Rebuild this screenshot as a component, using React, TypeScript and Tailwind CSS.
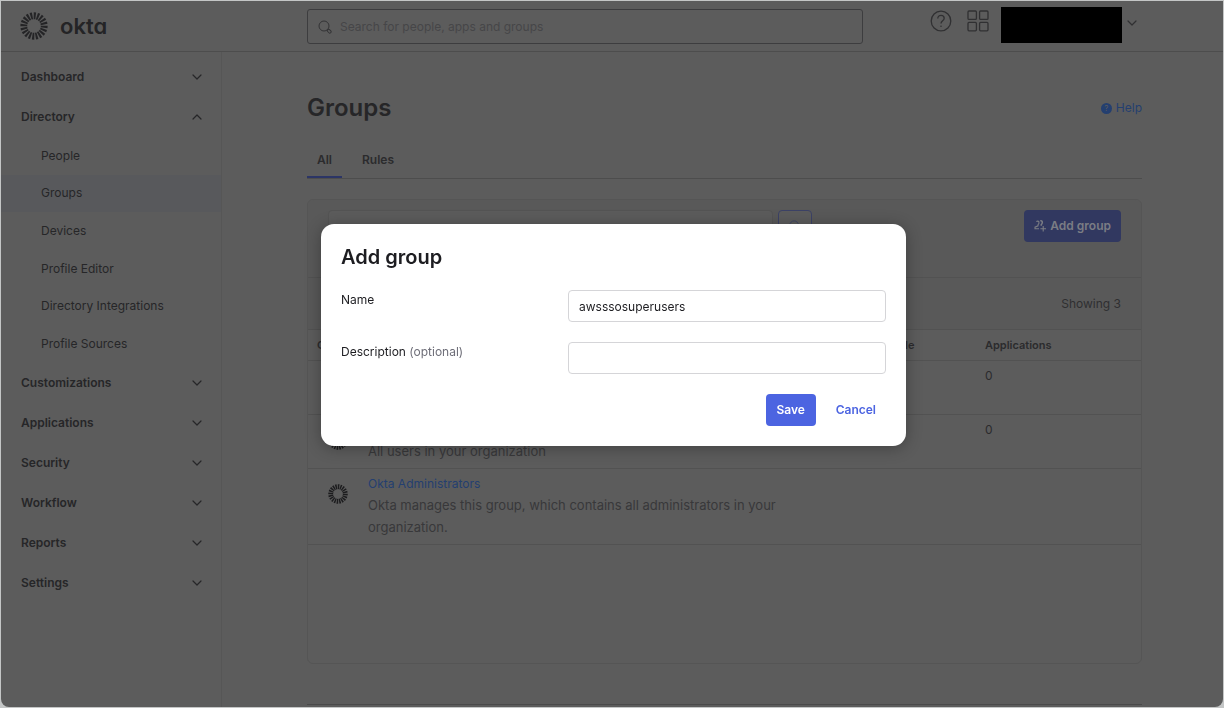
import { useState } from 'react';
import { ChevronDown, ChevronUp } from 'lucide-react';

type NavSection = {
  label: string;
  children?: string[];
};

type Group = {
  id: string;
  name?: string;
  description?: string;
  builtIn: boolean;
  applications?: number;
};

const NAV: NavSection[] = [
  { label: 'Dashboard' },
  {
    label: 'Directory',
    children: ['People', 'Groups', 'Devices', 'Profile Editor', 'Directory Integrations', 'Profile Sources'],
  },
  { label: 'Customizations' },
  { label: 'Applications' },
  { label: 'Security' },
  { label: 'Workflow' },
  { label: 'Reports' },
  { label: 'Settings' },
];

const GROUPS: Group[] = [
  { id: 'custom', builtIn: false, applications: 0 },
  { id: 'everyone', description: 'All users in your organization', builtIn: true, applications: 0 },
  {
    id: 'admins',
    name: 'Okta Administrators',
    description: 'Okta manages this group, which contains all administrators in your organization.',
    builtIn: true,
  },
];

const RAYS = Array.from({ length: 20 }, (_, i) => (i * 360) / 20);

function Sunburst({ className }: { className: string }) {
  return (
    <svg viewBox="0 0 28 28" className={className} fill="currentColor" aria-hidden="true">
      {RAYS.map((angle) => (
        <path key={angle} d="M12.8 0.4h2.4l-.4 6.8h-1.6z" transform={`rotate(${angle + 4} 14 14)`} />
      ))}
    </svg>
  );
}

function SearchIcon({ className }: { className: string }) {
  return (
    <svg viewBox="0 0 14 14" className={className} fill="none" stroke="currentColor" strokeWidth="1" aria-hidden="true">
      <circle cx="6" cy="6" r="5" />
      <rect x="-1.3" y="-2.1" width="2.6" height="4.2" rx="1.2" transform="translate(11.2 11.2) rotate(-45)" />
    </svg>
  );
}

function HelpIcon() {
  return (
    <svg viewBox="0 0 22 22" className="size-[22px]" fill="none" stroke="currentColor" strokeWidth="1.3" aria-hidden="true">
      <circle cx="11" cy="11" r="9.8" />
      <path d="M7.8 8.4c0-1.9 1.4-3.1 3.2-3.1s3.2 1.2 3.2 2.9c0 2.4-3.2 2.6-3.2 5.2" />
      <circle cx="11" cy="16.2" r="0.8" fill="currentColor" stroke="none" />
    </svg>
  );
}

function GridIcon() {
  return (
    <svg viewBox="0 0 22 22" className="size-[22px]" fill="none" stroke="currentColor" strokeWidth="1.3" aria-hidden="true">
      <rect x="1" y="1" width="8.4" height="8.4" rx="1" />
      <rect x="12.6" y="1" width="8.4" height="8.4" rx="1" />
      <rect x="1" y="12.4" width="8.4" height="8.4" rx="1" />
      <rect x="12.6" y="12.4" width="8.4" height="8.4" rx="1" />
    </svg>
  );
}

function AddGroupIcon() {
  return (
    <svg viewBox="0 0 12 12" className="size-3" fill="none" stroke="currentColor" strokeWidth="1.1" aria-hidden="true">
      <path d="M2.5 1.8c.4-.9 2-.9 2.4 0 .3 1-.2 2.3-.9 3v1L1 7.2v1.6h4" />
      <path d="M6.3.8c1.6-.3 2.3.9 1.9 2.2-.1.8-.6 1.3-1 1.8v.9" strokeWidth="1.5" />
      <path d="M9.2 6v5.6M6.4 8.8H12" />
    </svg>
  );
}

function Header() {
  return (
    <header className="flex h-[51px] items-start border-b border-[#4d4d4d] pr-[83px] pl-[19px]">
      <a href="#home" className="mt-[11px] flex w-[287px] shrink-0 items-center gap-3 text-[#242426]">
        <Sunburst className="size-7" />
        <span className="text-[22px] leading-6 font-semibold [font-feature-settings:'cv11']">okta</span>
      </a>
      <label className="mt-2 flex h-[35px] w-[556px] items-center gap-2 rounded-[3px] border border-[#3d3d3f] pl-2.5">
        <SearchIcon className="size-[14px] shrink-0 text-[#333335]" />
        <input
          type="search"
          aria-label="Search"
          placeholder="Search for people, apps and groups"
          className="w-full bg-transparent text-[12px] outline-none placeholder:text-[#464648]"
        />
      </label>
      <div className="mt-1.5 ml-auto flex items-start text-[#303032]">
        <button type="button" aria-label="Help center" className="mt-[3px] mr-[15px]">
          <HelpIcon />
        </button>
        <button type="button" aria-label="Apps" className="mt-[3px] mr-3">
          <GridIcon />
        </button>
        <button type="button" aria-label="Account" className="flex items-center gap-0.5">
          <span className="h-9 w-[121px] bg-black" />
          <ChevronDown className="mb-1 size-4" strokeWidth={1.8} />
        </button>
      </div>
    </header>
  );
}

function Sidebar() {
  return (
    <nav className="w-[221px] shrink-0 border-r border-[#565656] pt-[5px] text-[12px] text-[#262628]">
      {NAV.map(({ label, children }) => {
        const Chevron = children ? ChevronUp : ChevronDown;
        return (
          <div key={label}>
            <button type="button" className="flex h-10 w-full items-center justify-between pr-4 pl-5 font-semibold">
              {label}
              <Chevron className="size-4" strokeWidth={1.8} />
            </button>
            {children && (
              <ul className="grid h-[226px] grid-rows-6">
                {children.map((child) => (
                  <li key={child} className={child === 'Groups' ? 'bg-[#58595c]' : ''}>
                    <a href="#nav" className="flex h-full items-center pl-10">
                      {child}
                    </a>
                  </li>
                ))}
              </ul>
            )}
          </div>
        );
      })}
    </nav>
  );
}

function GroupsTable() {
  return (
    <table className="w-full table-fixed text-left">
      <colgroup>
        <col className="w-[60px]" />
        <col />
        <col className="w-[107px]" />
        <col className="w-[156px]" />
      </colgroup>
      <thead>
        <tr className="h-[30px] border-b border-[#525252] text-[11px] text-[#2b2b2d]">
          <th colSpan={2} className="pl-[9px] font-semibold">Group</th>
          <th className="font-semibold">People</th>
          <th className="font-semibold">Applications</th>
        </tr>
      </thead>
      <tbody>
        {GROUPS.map((group) => (
          <tr key={group.id} className="h-[54px] border-b border-[#525252] align-top">
            <td className="pt-[15px] pl-5 text-[#1c1c1e]">{group.builtIn && <Sunburst className="size-5" />}</td>
            <td className="pt-[7px] pb-1.5">
              <div className="h-4 text-[12px] leading-4">
                {group.name && <a href="#group" className="text-[#243f70]">{group.name}</a>}
              </div>
              <p className="mt-0.5 max-w-[440px] text-[13px] leading-[22px] text-[#38383a]">{group.description}</p>
            </td>
            <td />
            <td className="pt-[7px] text-[12px] leading-4 text-[#2b2b2d]">{group.applications}</td>
          </tr>
        ))}
      </tbody>
    </table>
  );
}

function AddGroupDialog() {
  const [name, setName] = useState('awsssosuperusers');
  const [description, setDescription] = useState('');

  return (
    <div className="fixed inset-0 flex items-start justify-center pt-56 pl-[3px]">
      <form
        role="dialog"
        aria-labelledby="add-group-title"
        className="w-[585px] rounded-[13px] bg-white p-5 text-[12px] text-[#1d1d21] shadow-[0_2px_16px_rgba(0,0,0,0.3)]"
      >
        <h2 id="add-group-title" className="text-[20px] leading-[26px] font-semibold">Add group</h2>
        <div className="mt-5 flex justify-between">
          <label htmlFor="group-name" className="pt-0.5 leading-4">Name</label>
          <input
            id="group-name"
            value={name}
            onChange={(e) => setName(e.target.value)}
            className="h-8 w-[318px] rounded border border-[#d5d5d8] px-2.5 outline-none"
          />
        </div>
        <div className="mt-5 flex justify-between">
          <label htmlFor="group-description" className="pt-0.5 leading-4">
            Description <span className="text-[#6e6e78]">(optional)</span>
          </label>
          <input
            id="group-description"
            value={description}
            onChange={(e) => setDescription(e.target.value)}
            className="h-8 w-[318px] rounded border border-[#d5d5d8] px-2.5 outline-none"
          />
        </div>
        <div className="mt-5 flex justify-end gap-2.5 font-semibold">
          <button type="button" className="h-8 w-[50px] rounded bg-[#4c64e1] text-white">Save</button>
          <button type="button" className="h-8 px-2.5 text-[#4c64e1]">Cancel</button>
        </div>
      </form>
    </div>
  );
}

export default function App() {
  return (
    <div className="flex min-h-screen flex-col bg-[#c4c6c6] p-px font-['Inter',sans-serif]">
      <div className="flex grow flex-col rounded-b-lg bg-[#5c5c5c]">
        <Header />
        <div className="flex grow">
          <Sidebar />
          <main className="min-w-0 grow pt-[42px] pr-[81px] pl-[85px]">
            <div className="flex items-center justify-between">
              <h1 className="text-[24px] leading-7 font-semibold text-[#262628]">Groups</h1>
              <a href="#help" className="flex items-center gap-1 text-[12px] text-[#243f70]">
                <span className="flex size-[11px] items-center justify-center rounded-full bg-[#243f70] text-[8px] text-[#5c5c5c]">?</span>
                Help
              </a>
            </div>
            <div role="tablist" className="mt-[22px] flex border-b border-[#4d4d4d] text-[12px] font-semibold text-[#2b2b2d]">
              <button type="button" role="tab" aria-selected="true" className="h-[34px] border-b-2 border-[#2c3566] px-2.5">All</button>
              <button type="button" role="tab" aria-selected="false" className="h-[34px] border-b-2 border-transparent px-5">Rules</button>
            </div>

            <section className="mt-5 min-h-[465px] rounded-md border border-[#555555]">
              <div className="flex h-[78px] items-start rounded-t-md border-b border-[#525252] bg-[#595959] pt-2.5 pr-5 pl-5">
                <input type="text" aria-label="Search groups" className="h-8 w-[445px] rounded border border-[#545454] bg-[#5c5c5c]" />
                <button type="button" aria-label="Search" className="ml-[5px] flex h-8 w-[34px] items-center justify-center rounded border border-[#3c4266] bg-[#5c5c5c] text-[#3c4266]">
                  <SearchIcon className="size-3" />
                </button>
                <button type="button" className="ml-auto flex h-8 items-center gap-1 rounded bg-[#313860] px-2.5 text-[12px] font-semibold text-[#7b7d84]">
                  <AddGroupIcon />
                  Add group
                </button>
              </div>
              <div className="flex h-[52px] items-center justify-end border-b border-[#525252] bg-[#595959] pr-5 text-[12px] text-[#2f2f31]">
                Showing 3
              </div>
              <GroupsTable />
            </section>
            <hr className="mt-10 border-[#4a4a4a]" />
          </main>
        </div>
      </div>
      <AddGroupDialog />
    </div>
  );
}
